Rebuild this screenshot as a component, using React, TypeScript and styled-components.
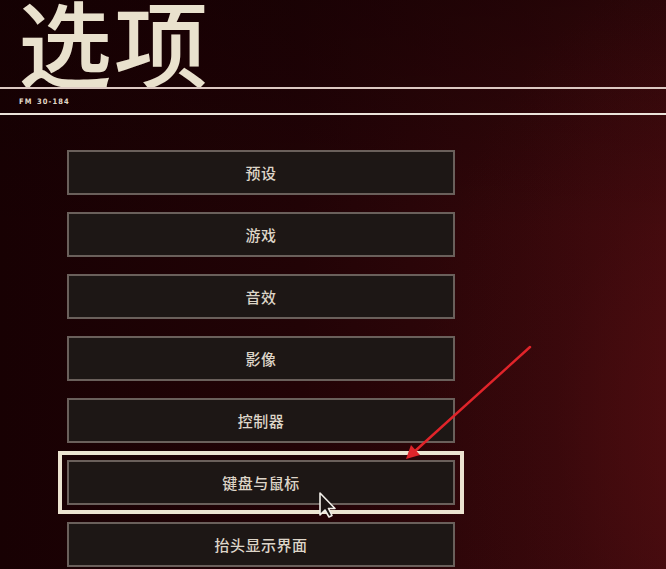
import styled, { createGlobalStyle } from "styled-components";

const GlobalStyle = createGlobalStyle`
  html, body {
    margin: 0;
    padding: 0;
  }
  body {
    width: 666px;
    height: 569px;
    overflow: hidden;
    font-family: "Noto Sans CJK SC", "Noto Sans", sans-serif;
    background-color: #1c0204;
  }
`;

const items = ["预设", "游戏", "音效", "影像", "控制器", "键盘与鼠标", "抬头显示界面"];
const selectedIndex = 5;

const App = () => {
  return (
    <Screen>
      <GlobalStyle />
      <Header>
        <Title>选项</Title>
        <Rule $tone="#dcc8c2" />
        <SubRow>FM 30-184</SubRow>
        <Rule $tone="#ebe3da" />
      </Header>

      <Menu>
        {items.map((label, i) => (
          <MenuButton key={label} $active={i === selectedIndex}>
            {label}
          </MenuButton>
        ))}
      </Menu>

      <Annotation width="666" height="569" viewBox="0 0 666 569">
        <line
          x1="530"
          y1="347"
          x2="414"
          y2="452"
          stroke="#e0242a"
          strokeWidth="2.5"
          strokeLinecap="round"
        />
        <polygon points="406,459 411,445 420,455" fill="#e0242a" />
      </Annotation>

      <Pointer width="20" height="28" viewBox="0 0 20 28">
        <path
          d="M2 2 L2 24 L7 19 L11 26 L14 24.5 L10.5 17.5 L17 17.5 Z"
          fill="#1b1513"
          stroke="#f2efe9"
          strokeWidth="1.6"
          strokeLinejoin="round"
        />
      </Pointer>
    </Screen>
  );
};

export default App;

const Screen = styled.div`
  position: relative;
  width: 666px;
  height: 569px;
  overflow: hidden;
  background:
    radial-gradient(
      ellipse 300px 460px at 720px 420px,
      rgba(90, 14, 18, 0.55),
      rgba(70, 10, 14, 0.25) 55%,
      rgba(0, 0, 0, 0) 100%
    ),
    linear-gradient(180deg, rgba(16, 0, 2, 0.45) 0%, rgba(0, 0, 0, 0) 40%),
    linear-gradient(90deg, #180103 0%, #220306 45%, #32070a 78%, #410b0e 100%);
`;

const Header = styled.div`
  display: flex;
  flex-direction: column;
`;

const Title = styled.div`
  height: 87px;
  padding-left: 18px;
  font-family: "Noto Sans CJK SC", sans-serif;
  font-weight: 500;
  font-size: 94px;
  line-height: 80px;
  letter-spacing: 2px;
  color: #e9e1cd;
  overflow: hidden;
`;

const Rule = styled.div<{ $tone: string }>`
  height: 2px;
  background: ${(p) => p.$tone};
`;

const SubRow = styled.div`
  height: 24px;
  padding-left: 19px;
  display: flex;
  align-items: center;
  font-family: "DejaVu Sans Condensed", "DejaVu Sans", sans-serif;
  font-stretch: condensed;
  font-weight: bold;
  font-size: 7.5px;
  letter-spacing: 1.1px;
  word-spacing: 1px;
  color: #e2d9c8;
`;

const Menu = styled.div`
  display: flex;
  flex-direction: column;
  row-gap: 17px;
  padding: 35px 0 0 67px;
`;

const MenuButton = styled.div<{ $active: boolean }>`
  width: 388px;
  height: 45px;
  box-sizing: border-box;
  display: flex;
  align-items: center;
  justify-content: center;
  background-color: #1d1715;
  border: 2px solid #6a605b;
  color: #ddd5c8;
  font-size: 15px;
  font-weight: 500;
  letter-spacing: 0.5px;
  outline: ${(p) => (p.$active ? "4px solid #ece4d1" : "none")};
  outline-offset: 5px;
`;

const Annotation = styled.svg`
  position: absolute;
  left: 0;
  top: 0;
  pointer-events: none;
`;

const Pointer = styled.svg`
  position: absolute;
  left: 318px;
  top: 491px;
`;
